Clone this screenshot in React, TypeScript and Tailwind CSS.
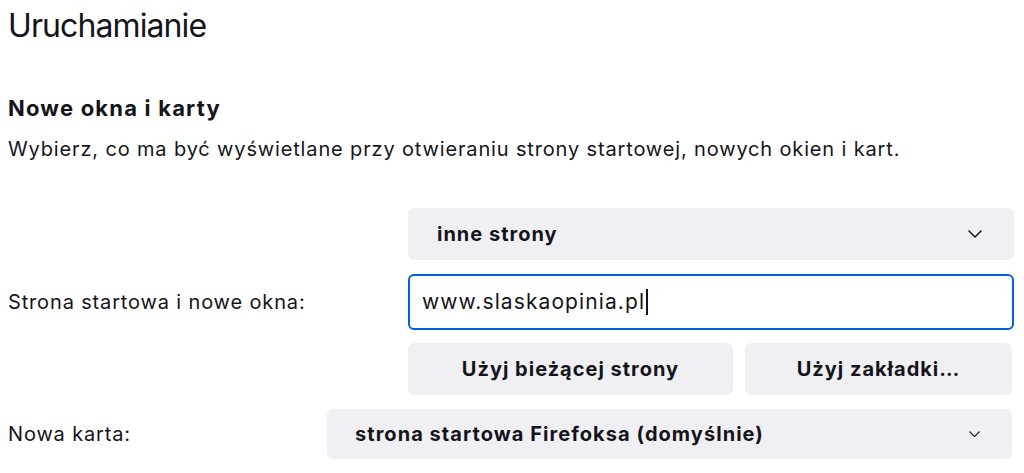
import React from "react";

const Chevron = ({ w = 14, sw = 1.5 }: { w?: number; sw?: number }) => (
  <svg width={w} height={w / 2 + 1} viewBox="0 0 14 8" fill="none" className="shrink-0">
    <path d="M1 1l6 6 6-6" stroke="#15141a" strokeWidth={sw} strokeLinecap="round" strokeLinejoin="round" />
  </svg>
);

export default function App() {
  return (
    <div
      className="w-[1024px] h-[473px] overflow-hidden bg-white text-[#15141a] pl-2 pr-[10px] pt-[6px]"
      style={{ fontFamily: "Inter, 'Noto Sans', sans-serif" }}
    >
      <h1 className="text-[32px] leading-[40px] font-normal tracking-[-0.9px]">Uruchamianie</h1>
      <h2 className="mt-[48px] text-[22px] leading-[28px] font-bold tracking-[1.2px]">Nowe okna i karty</h2>
      <p className="mt-[14px] text-[20px] leading-[26px] tracking-[0.85px]">
        Wybierz, co ma być wyświetlane przy otwieraniu strony startowej, nowych okien i kart.
      </p>

      <div className="mt-[46px] flex items-center">
        <div className="w-[400px] text-[20px] leading-[26px] tracking-[0.85px]">Strona startowa i nowe okna:</div>
        <div className="flex-1 flex flex-col">
          <div className="h-[52px] rounded-[6px] bg-[#f0f0f4] flex items-center justify-between pl-[29px] pr-[32px]">
            <span className="text-[20px] font-bold tracking-[1px]">inne strony</span>
            <Chevron />
          </div>
          <div className="mt-[14px] h-[56px] rounded-[6px] border-2 border-[#0061e0] flex items-center pl-[12px]">
            <span className="text-[21px] tracking-[1.1px]">www.slaskaopinia.pl</span>
            <span className="w-[1.5px] h-[26px] bg-[#15141a] ml-[1px]" />
          </div>
          <div className="mt-[13px] flex gap-[12px] pr-[2px]">
            <div className="w-[325px] h-[52px] rounded-[6px] bg-[#f0f0f4] flex items-center justify-center text-[20px] font-bold tracking-[1px]">
              Użyj bieżącej strony
            </div>
            <div className="flex-1 h-[52px] rounded-[6px] bg-[#f0f0f4] flex items-center justify-center text-[20px] font-bold tracking-[1px]">
              Użyj zakładki…
            </div>
          </div>
        </div>
      </div>

      <div className="mt-[14px] flex items-center pr-[2px]">
        <div className="w-[319px] text-[20px] leading-[26px] tracking-[0.85px]">Nowa karta:</div>
        <div className="flex-1 h-[50px] rounded-[6px] bg-[#f0f0f4] flex items-center justify-between pl-[28px] pr-[32px]">
          <span className="text-[20px] font-bold tracking-[1.05px]">strona startowa Firefoksa (domyślnie)</span>
          <Chevron w={11} sw={1.6} />
        </div>
      </div>
    </div>
  );
}
